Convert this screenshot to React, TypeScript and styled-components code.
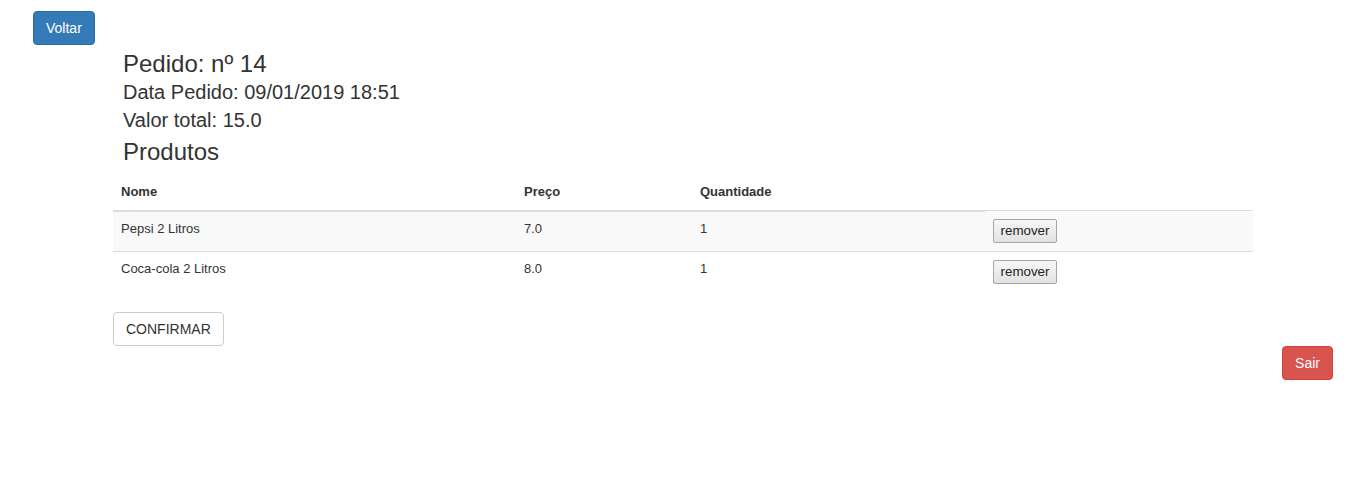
import React from "react";
import styled, { createGlobalStyle, css } from "styled-components";

const GlobalStyle = createGlobalStyle`
  html, body { margin: 0; padding: 0; background: #fff; }
  body {
    font-family: "Liberation Sans", Arial, sans-serif;
    font-size: 14px;
    line-height: 1.42857143;
    color: #333;
  }
  * { box-sizing: border-box; }
`;

const Page = styled.div`
  display: flex;
  flex-direction: column;
`;

const TopBar = styled.div`
  display: flex;
  padding: 11px 0 0 33px;
`;

type Variant = "primary" | "default" | "danger";

const variants: Record<Variant, ReturnType<typeof css>> = {
  primary: css`
    color: #fff;
    background: #337ab7;
    border-color: #2e6da4;
  `,
  default: css`
    color: #333;
    background: #fff;
    border-color: #ccc;
  `,
  danger: css`
    color: #fff;
    background: #d9534f;
    border-color: #d43f3a;
  `,
};

const Btn = styled.button<{ $variant: Variant }>`
  display: inline-block;
  font-family: "Liberation Sans", Arial, sans-serif;
  font-size: 14px;
  line-height: 1.42857143;
  padding: 6px 12px;
  border: 1px solid transparent;
  border-radius: 4px;
  cursor: pointer;
  white-space: nowrap;
  ${(p) => variants[p.$variant]}
`;

const Content = styled.div`
  margin-left: 113px;
  width: 1140px;
  display: flex;
  flex-direction: column;
  align-items: flex-start;
`;

const Info = styled.div`
  padding-left: 10px;
  display: flex;
  flex-direction: column;
`;

const Heading = styled.div<{ $size: number; $gap: number }>`
  font-size: ${(p) => p.$size}px;
  line-height: ${(p) => (p.$size === 24 ? 26 : 22)}px;
  margin-top: ${(p) => p.$gap}px;
  font-weight: 500;
  color: #333;
`;

const Table = styled.table`
  width: 1140px;
  margin-top: 10px;
  margin-bottom: 20px;
  border-collapse: collapse;
  border-spacing: 0;
  font-size: 13px;
  table-layout: fixed;
`;

const Th = styled.th`
  text-align: left;
  font-weight: bold;
  vertical-align: bottom;
  padding: 8px;
  line-height: 1.42857143;
  border-bottom: 2px solid #ddd;
`;

const Tr = styled.tr<{ $striped: boolean }>`
  background: ${(p) => (p.$striped ? "#f9f9f9" : "transparent")};
`;

const Td = styled.td`
  padding: 8px;
  line-height: 1.42857143;
  vertical-align: top;
  border-top: 1px solid #ddd;
`;

const RemoveBtn = styled.button`
  font-family: "Liberation Sans", Arial, sans-serif;
  font-size: 13.33px;
  line-height: 16px;
  height: 24px;
  width: 64px;
  padding: 1px 0;
  color: #222;
  background: linear-gradient(#f7f7f7, #e1e1e1);
  border: 1px solid #a6a6a6;
  border-radius: 2px;
  cursor: pointer;
`;

const Footer = styled.div`
  display: flex;
  justify-content: flex-end;
  padding-right: 21px;
`;

const products = [
  { nome: "Pepsi 2 Litros", preco: "7.0", qtd: "1" },
  { nome: "Coca-cola 2 Litros", preco: "8.0", qtd: "1" },
];

export default function App() {
  return (
    <Page>
      <GlobalStyle />
      <TopBar>
        <Btn $variant="primary">Voltar</Btn>
      </TopBar>
      <Content>
        <Info>
          <Heading $size={24} $gap={6}>Pedido: nº 14</Heading>
          <Heading $size={20} $gap={4}>Data Pedido: 09/01/2019 18:51</Heading>
          <Heading $size={20} $gap={6}>Valor total: 15.0</Heading>
          <Heading $size={24} $gap={8}>Produtos</Heading>
        </Info>
        <Table>
          <colgroup>
            <col style={{ width: 403 }} />
            <col style={{ width: 176 }} />
            <col style={{ width: 293 }} />
            <col style={{ width: 268 }} />
          </colgroup>
          <thead>
            <tr>
              <Th>Nome</Th>
              <Th>Preço</Th>
              <Th>Quantidade</Th>
            </tr>
          </thead>
          <tbody>
            {products.map((p, i) => (
              <Tr key={p.nome} $striped={i % 2 === 0}>
                <Td>{p.nome}</Td>
                <Td>{p.preco}</Td>
                <Td>{p.qtd}</Td>
                <Td>
                  <RemoveBtn>remover</RemoveBtn>
                </Td>
              </Tr>
            ))}
          </tbody>
        </Table>
        <Btn $variant="default">CONFIRMAR</Btn>
      </Content>
      <Footer>
        <Btn $variant="danger">Sair</Btn>
      </Footer>
    </Page>
  );
}
